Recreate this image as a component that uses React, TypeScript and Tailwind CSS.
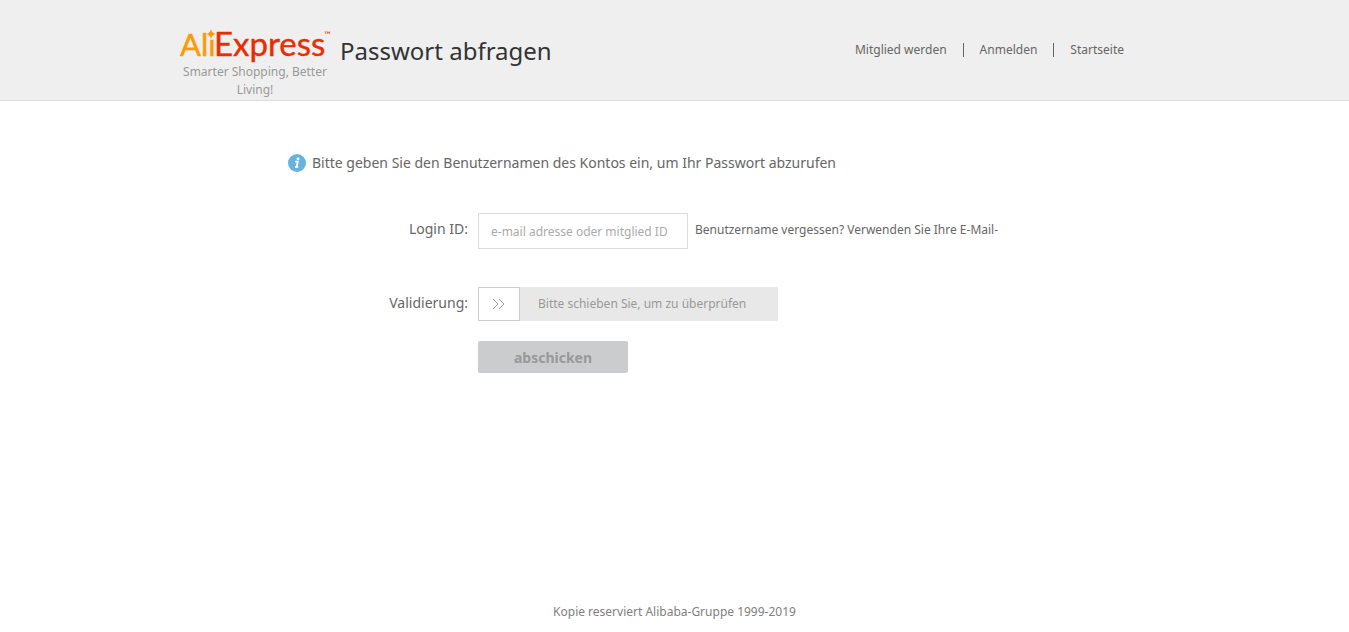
import { useState } from 'react';

const links = ['Mitglied werden', 'Anmelden', 'Startseite'];

function Logo() {
  return (
    <a href="#" className="flex w-[150px] flex-col text-center text-[#999999]">
      <svg viewBox="0 0 150 42" className="h-[42px] w-full overflow-visible" role="img" aria-label="AliExpress">
        <text x="0" y="35" fill="#ff9900" stroke="#ff9900" strokeWidth="0.4" fontFamily="Lato, sans-serif" fontSize="31">
          Alı
        </text>
        <path d="M31 8Q31.800 12.200 36 13Q31.800 13.800 31 18Q30.200 13.800 26 13Q30.200 12.200 31 8Z" fill="#ff9900" />
        <text x="34" y="35" fill="#e62e04" stroke="#e62e04" strokeWidth="0.4" fontFamily="Lato, sans-serif" fontSize="33">
          Express
        </text>
        <text x="144" y="17" fill="#e62e04" fontFamily="Lato, sans-serif" fontSize="9">
          ™
        </text>
      </svg>
      <span className="text-[12px] leading-[18px]">Smarter Shopping, Better Living!</span>
    </a>
  );
}

function InfoIcon() {
  return (
    <svg viewBox="0 0 18 18" className="size-[18px] shrink-0" aria-hidden="true">
      <circle cx="9" cy="9" r="9" fill="#67b3df" />
      <circle cx="10" cy="4.800" r="1.400" fill="#fff" />
      <path d="M7.200 7.700h2.600L8.700 12.800h1.500M7 13.200h2.500" fill="none" stroke="#fff" strokeWidth="1.800" />
    </svg>
  );
}

export default function App() {
  const [login, setLogin] = useState('');
  return (
    <div className="flex min-h-screen flex-col bg-white font-['Noto_Sans','Open_Sans',sans-serif] text-[12px] text-[#666666]">
      <header className="border-b border-[#dddddd] bg-[#efefef]">
        <div className="mx-auto flex h-[100px] max-w-[989px] items-start">
          <div className="pt-[21px]">
            <Logo />
          </div>
          <h1 className="ml-2.5 pt-[33px] text-[24px] leading-9 text-[#333333]">Passwort abfragen</h1>
          <nav className="mr-[45px] ml-auto flex items-center pt-10 leading-5">
            {links.map((label, i) => (
              <div key={label} className="flex items-center">
                {i > 0 && <span className="mx-4 h-3.5 w-px bg-[#666666]" />}
                <a href="#">{label}</a>
              </div>
            ))}
          </nav>
        </div>
      </header>

      <main className="mx-auto w-full max-w-[773px] grow pt-[51px]">
        <p className="flex items-center gap-1.5 text-[14px] leading-[22px]">
          <InfoIcon />
          Bitte geben Sie den Benutzernamen des Kontos ein, um Ihr Passwort abzurufen
        </p>
        <form className="mt-[39px]" onSubmit={(e) => e.preventDefault()}>
          <div className="flex items-start">
            <label htmlFor="login" className="w-[180px] text-right text-[14px] leading-8">
              Login ID:
            </label>
            <input
              id="login"
              value={login}
              onChange={(e) => setLogin(e.target.value)}
              placeholder="e-mail adresse oder mitglied ID"
              className="ml-2.5 h-9 w-[210px] border border-[#dddddd] px-3 text-[12px] outline-none placeholder:text-[#aaaaaa]"
            />
            <span className="ml-[7px] leading-[34px]">Benutzername vergessen? Verwenden Sie Ihre E-Mail-</span>
          </div>
          <div className="mt-[38px] flex items-start">
            <span id="validation" className="w-[180px] text-right text-[14px] leading-8">
              Validierung:
            </span>
            <div className="ml-2.5 flex h-[34px] w-[300px] items-center bg-[#e8e8e8] text-[#999999]">
              <button
                type="button"
                aria-labelledby="validation"
                className="flex h-[34px] w-[42px] items-center justify-center border border-[#cccccc] bg-white"
              >
                <svg viewBox="0 0 14 12" className="h-3 w-3.5" fill="none" stroke="#999999" aria-hidden="true">
                  <path d="M1 1L6 6L1 11M7 1L12 6L7 11" />
                </svg>
              </button>
              <span className="ml-[18px] leading-9">Bitte schieben Sie, um zu überprüfen</span>
            </div>
          </div>
          <button
            type="submit"
            className="mt-5 ml-[190px] h-8 w-[150px] rounded-[2px] bg-[#cbccce] text-[14px] font-bold text-[#999999]"
          >
            abschicken
          </button>
        </form>
      </main>

      <footer className="pb-[11px] text-center leading-[18px] text-[#808080]">Kopie reserviert Alibaba-Gruppe 1999-2019</footer>
    </div>
  );
}
